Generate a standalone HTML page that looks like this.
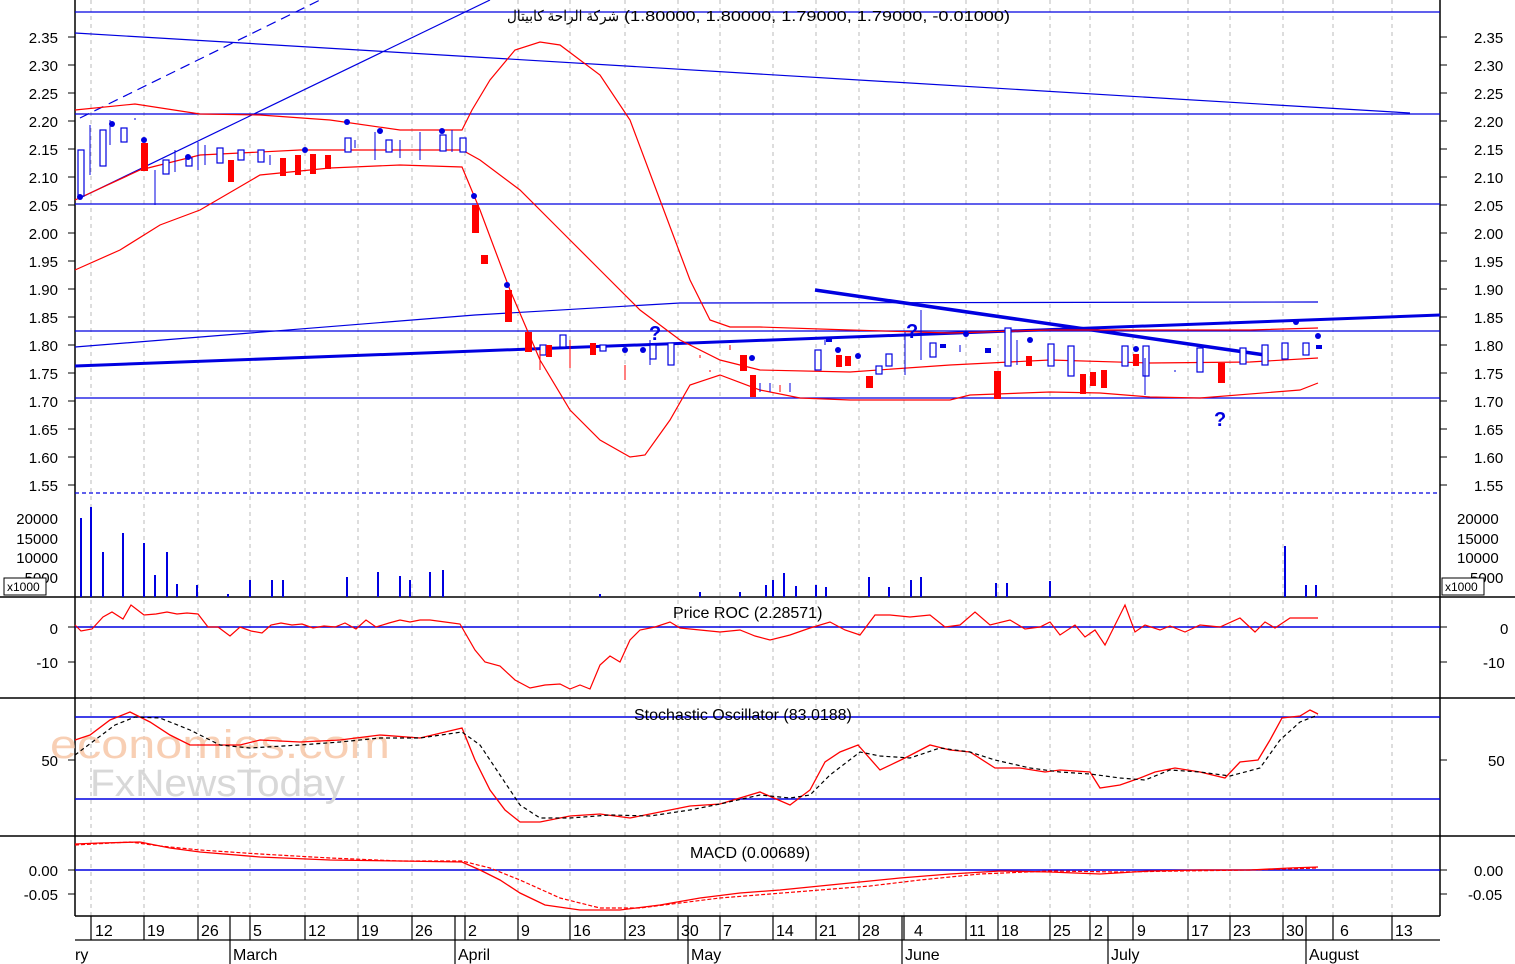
<!DOCTYPE html>
<html><head><meta charset="utf-8"><style>
body{margin:0;background:#fff;}
svg{display:block;font-family:"Liberation Sans","Noto Sans CJK SC",sans-serif;}
</style></head><body>
<svg width="1515" height="964" viewBox="0 0 1515 964" xmlns="http://www.w3.org/2000/svg">
<rect width="1515" height="964" fill="#fff"/>
<g stroke="#bbb" stroke-dasharray="4,4" stroke-width="1">
<path d="M91 0V916M144 0V916M198 0V916M250 0V916M305 0V916M358 0V916M412 0V916M465 0V916M518 0V916M570 0V916M625 0V916M678 0V916M720 0V916M773 0V916M816 0V916M859 0V916M904 0V916M966 0V916M998 0V916M1050 0V916M1090 0V916M1133 0V916M1188 0V916M1230 0V916M1283 0V916M1333 0V916M1392 0V916"/>
</g>
<g stroke="#000" stroke-width="1.5" fill="none">
<path d="M75 0V916M1440 0V916M75 597H1440M0 698H1515M75 836H1440M75 916H1440M0 597H75M1440 597H1515M0 836H75M1440 836H1515"/>
</g>
<g stroke="#000" stroke-width="1">
<path d="M68 37H75M68 65H75M68 93H75M68 121H75M68 149H75M68 177H75M68 205H75M68 233H75M68 261H75M68 289H75M68 317H75M68 345H75M68 373H75M68 401H75M68 429H75M68 457H75M68 485H75M1440 37H1447M1440 65H1447M1440 93H1447M1440 121H1447M1440 149H1447M1440 177H1447M1440 205H1447M1440 233H1447M1440 261H1447M1440 289H1447M1440 317H1447M1440 345H1447M1440 373H1447M1440 401H1447M1440 429H1447M1440 457H1447M1440 485H1447M68 627H75M68 662H75M1440 627H1447M1440 662H1447M68 760H75M1440 760H1447M68 870H75M68 894H75M1440 870H1447M1440 894H1447"/>
</g>
<g font-size="15" fill="#000">
<g text-anchor="end">
<text x="58" y="43">2.35</text><text x="58" y="71">2.30</text><text x="58" y="99">2.25</text><text x="58" y="127">2.20</text><text x="58" y="155">2.15</text><text x="58" y="183">2.10</text><text x="58" y="211">2.05</text><text x="58" y="239">2.00</text><text x="58" y="267">1.95</text><text x="58" y="295">1.90</text><text x="58" y="323">1.85</text><text x="58" y="351">1.80</text><text x="58" y="379">1.75</text><text x="58" y="407">1.70</text><text x="58" y="435">1.65</text><text x="58" y="463">1.60</text><text x="58" y="491">1.55</text>
<text x="58" y="524">20000</text><text x="58" y="544">15000</text><text x="58" y="563">10000</text><text x="58" y="583">5000</text>
<text x="58" y="634">0</text><text x="58" y="668">-10</text><text x="58" y="766">50</text>
<text x="58" y="876">0.00</text><text x="58" y="900">-0.05</text>
</g>
<g>
<text x="1474" y="43">2.35</text><text x="1474" y="71">2.30</text><text x="1474" y="99">2.25</text><text x="1474" y="127">2.20</text><text x="1474" y="155">2.15</text><text x="1474" y="183">2.10</text><text x="1474" y="211">2.05</text><text x="1474" y="239">2.00</text><text x="1474" y="267">1.95</text><text x="1474" y="295">1.90</text><text x="1474" y="323">1.85</text><text x="1474" y="351">1.80</text><text x="1474" y="379">1.75</text><text x="1474" y="407">1.70</text><text x="1474" y="435">1.65</text><text x="1474" y="463">1.60</text><text x="1474" y="491">1.55</text>
<text x="1457" y="524">20000</text><text x="1457" y="544">15000</text><text x="1457" y="563">10000</text><text x="1470" y="583">5000</text>
<text x="1500" y="634">0</text><text x="1483" y="668">-10</text><text x="1488" y="766">50</text>
<text x="1474" y="876">0.00</text><text x="1468" y="900">-0.05</text>
</g>
</g>
<rect x="4" y="578" width="42" height="17" fill="#fff" stroke="#000"/><text x="7" y="591" font-size="12">x1000</text>
<rect x="1442" y="578" width="42" height="17" fill="#fff" stroke="#000"/><text x="1445" y="591" font-size="12">x1000</text>

<g stroke="#0000e0" stroke-width="1.2" fill="none">
<path d="M75 12H1440M75 114H1440M75 204H1440M75 331H1440M75 398H1440"/>
<path d="M75 493H1440" stroke-dasharray="4,3"/>
<path d="M75 33L1410 113"/>
<path d="M75 347L475 315L680 303L1318 302"/>
<path d="M80 198L490 0"/>
<path d="M80 118L320 0" stroke-dasharray="10,6"/>
<path d="M75 366L1440 315" stroke-width="3"/>
<path d="M815 290L1265 355" stroke-width="3.5"/>
</g>
<text x="507" y="21" font-size="15" fill="#000" textLength="112" lengthAdjust="spacingAndGlyphs">شركة الراحة كابيتال</text>
<text x="624" y="21" font-size="15" fill="#000" textLength="386" lengthAdjust="spacingAndGlyphs">(1.80000, 1.80000, 1.79000, 1.79000, -0.01000)</text>

<g stroke="#f00" stroke-width="1.2" fill="none">
<path d="M75 110L135 104L200 114L260 115L330 120L400 130L462 130L472 110L490 80L515 50L540 42L560 45L600 75L630 120L660 200L690 280L710 320L730 327L760 327L850 330L950 333L1050 330L1150 330L1250 330L1318 328"/>
<path d="M75 200L140 170L200 155L300 150L400 150L462 150L480 160L520 190L560 230L600 270L640 310L680 340L720 360L760 370L850 372L950 365L1050 360L1150 363L1250 362L1318 358"/>
<path d="M75 270L120 250L160 225L200 210L260 175L330 168L400 165L462 167L480 210L510 290L540 360L570 410L600 440L630 457L645 455L670 420L690 385L720 375L760 390L800 398L850 400L950 400L970 395L1050 392L1100 393L1150 397L1200 398L1300 390L1318 383"/>
</g>

<g stroke="#0000e0" fill="#fff" stroke-width="1.2">
<rect x="78" y="150" width="6" height="46"/><rect x="100" y="130" width="6" height="36"/><rect x="121" y="128" width="6" height="14"/>
<rect x="163" y="160" width="6" height="14"/><rect x="186" y="158" width="6" height="8"/><rect x="217" y="148" width="6" height="15"/>
<rect x="238" y="150" width="6" height="10"/><rect x="258" y="150" width="6" height="12"/><rect x="345" y="138" width="6" height="14"/>
<rect x="386" y="140" width="6" height="12"/><rect x="440" y="135" width="6" height="16"/><rect x="460" y="138" width="6" height="14"/>
<rect x="650" y="345" width="6" height="14"/><rect x="668" y="343" width="6" height="22"/><rect x="815" y="350" width="6" height="20"/>
<rect x="876" y="366" width="6" height="8"/><rect x="886" y="354" width="6" height="12"/><rect x="930" y="343" width="6" height="14"/>
<rect x="1005" y="328" width="6" height="38"/><rect x="1048" y="344" width="6" height="22"/><rect x="1068" y="346" width="6" height="30"/>
<rect x="1122" y="346" width="6" height="20"/><rect x="1143" y="346" width="6" height="30"/><rect x="1197" y="348" width="6" height="24"/>
<rect x="1240" y="348" width="6" height="16"/><rect x="1262" y="345" width="6" height="20"/><rect x="1282" y="343" width="6" height="16"/><rect x="1303" y="343" width="6" height="12"/>
<rect x="540" y="345" width="6" height="10"/><rect x="560" y="335" width="6" height="12"/><rect x="600" y="345" width="6" height="6"/>
</g>
<g fill="#f00">
<rect x="141" y="143" width="7" height="28"/><rect x="228" y="160" width="6" height="22"/><rect x="280" y="158" width="6" height="18"/><rect x="295" y="155" width="6" height="20"/><rect x="310" y="154" width="6" height="20"/><rect x="325" y="155" width="6" height="14"/>
<rect x="472" y="205" width="7" height="28"/><rect x="481" y="255" width="7" height="9"/><rect x="505" y="290" width="7" height="32"/><rect x="525" y="332" width="7" height="20"/><rect x="546" y="345" width="6" height="12"/><rect x="590" y="343" width="6" height="12"/>
<rect x="740" y="355" width="7" height="16"/><rect x="750" y="375" width="6" height="22"/><rect x="836" y="355" width="6" height="12"/><rect x="845" y="356" width="6" height="10"/><rect x="866" y="376" width="7" height="12"/>
<rect x="994" y="371" width="7" height="28"/><rect x="1026" y="356" width="6" height="10"/><rect x="1080" y="374" width="6" height="20"/><rect x="1090" y="372" width="6" height="14"/><rect x="1101" y="370" width="6" height="18"/><rect x="1133" y="354" width="6" height="12"/><rect x="1218" y="363" width="7" height="20"/>
</g>
<g stroke="#0000e0" stroke-width="1"><path d="M90 125V175M110 120V145M135 118V120M155 170V205M175 150V172M198 142V170M205 145V165M270 155V165M355 140V148M375 132V160M400 140V158M420 132V160M452 130V152M650 340V365M760 383V392M770 383V392M790 383V392M825 340V345M905 332V375M921 310V360M960 345V352M1017 340V365M1145 358V395M1175 370V372"/></g>
<g stroke="#f00" stroke-width="1"><path d="M570 340V368M625 365V380M700 355V358M710 370V372M730 345V350M780 385V392M540 350V370"/></g>
<g fill="#0000e0">
<circle cx="80" cy="197" r="3"/><circle cx="112" cy="124" r="3"/><circle cx="144" cy="140" r="3"/><circle cx="188" cy="157" r="3"/><circle cx="305" cy="150" r="3"/><circle cx="347" cy="122" r="3"/><circle cx="380" cy="131" r="3"/><circle cx="442" cy="131" r="3"/><circle cx="474" cy="196" r="3"/><circle cx="507" cy="285" r="3"/><circle cx="625" cy="350" r="3"/><circle cx="643" cy="350" r="3"/><circle cx="752" cy="358" r="3"/><circle cx="838" cy="350" r="3"/><circle cx="858" cy="356" r="3"/><circle cx="966" cy="334" r="3"/><circle cx="1030" cy="340" r="3"/><circle cx="1136" cy="349" r="3"/><circle cx="1318" cy="336" r="3"/><circle cx="1296" cy="322" r="3"/>
<rect x="826" y="338" width="6" height="4"/><rect x="940" y="344" width="6" height="4"/><rect x="985" y="348" width="6" height="5"/><rect x="1316" y="345" width="6" height="4"/>
</g>
<g fill="#0000e0" font-size="20" font-weight="bold"><text x="649" y="340">?</text><text x="906" y="338">?</text><text x="1214" y="426">?</text></g>

<g stroke="#0000e0" stroke-width="2">
<path d="M81 597V518M91 597V507M103 597V552M123 597V533M144 597V543M155 597V575M167 597V552M177 597V584M197 597V585M250 597V580M272 597V580M283 597V580M347 597V577M378 597V572M400 597V576M410 597V580M430 597V572M443 597V570M766 597V585M773 597V580M784 597V573M796 597V586M816 597V585M826 597V587M869 597V577M889 597V587M911 597V580M921 597V577M996 597V583M1007 597V583M1050 597V581M1285 597V546M1306 597V585M1316 597V585M228 597V594M600 597V594M700 597V592M740 597V592"/>
</g>

<path d="M75 627H1440" stroke="#0000e0" stroke-width="1.5"/>
<text x="673" y="618" font-size="16">Price ROC (2.28571)</text>
<path fill="none" stroke="#f00" stroke-width="1.2" d="M75 625L81 631L92 629L103 617L112 612L123 619L131 605L144 615L156 614L167 612L177 614L187 613L198 614L208 627L218 627L230 636L240 627L251 631L262 633L271 625L281 623L292 625L302 624L313 628L324 626L335 627L345 623L356 629L366 620L376 627L389 623L400 620L410 622L420 620L430 620L445 622L460 624L475 650L485 662L500 666L515 680L530 688L545 685L560 684L570 689L580 685L590 689L600 665L610 656L620 662L630 640L640 630L655 627L670 622L680 628L700 630L720 632L740 630L755 636L770 640L790 635L810 628L830 622L845 630L860 635L875 615L890 615L910 617L930 615L945 627L960 625L975 612L990 625L1010 620L1025 629L1040 627L1050 622L1060 635L1075 625L1085 637L1095 630L1105 645L1115 625L1125 605L1135 632L1145 625L1160 630L1170 626L1185 632L1200 625L1220 627L1240 618L1255 632L1265 622L1275 628L1290 618L1318 618"/>

<path d="M75 717H1440M75 799H1440" stroke="#0000e0" stroke-width="1.5"/>
<text x="50" y="758" font-size="40" fill="#f7c7a8" opacity="0.85" textLength="340" lengthAdjust="spacingAndGlyphs">economies.com</text>
<text x="90" y="796" font-size="38" fill="#d8d8d8" textLength="255" lengthAdjust="spacingAndGlyphs">FxNewsToday</text>
<text x="634" y="720" font-size="16">Stochastic Oscillator (83.0188)</text>
<path fill="none" stroke="#f00" stroke-width="1.3" d="M75 740L90 735L110 720L130 712L150 722L170 735L190 745L210 745L240 745L260 740L300 742L340 740L380 735L420 738L462 728L475 760L490 790L505 810L520 822L540 822L570 816L600 814L630 818L660 812L690 806L720 804L760 792L790 805L810 790L825 762L840 752L858 745L880 770L905 758L930 745L950 750L970 752L995 768L1020 768L1045 772L1060 770L1090 772L1100 788L1120 785L1140 778L1155 772L1175 768L1200 772L1225 778L1240 762L1258 760L1270 740L1282 718L1300 716L1310 710L1318 714"/>
<path fill="none" stroke="#000" stroke-width="1.2" stroke-dasharray="4,3" d="M75 755L95 740L115 725L135 717L160 718L190 730L220 745L250 748L300 745L340 742L380 738L420 738L462 732L480 745L500 775L520 805L540 818L570 818L610 815L650 816L690 810L720 804L760 795L790 798L810 795L830 775L860 752L880 756L910 758L940 748L970 752L995 760L1030 768L1060 772L1090 774L1120 778L1145 780L1170 770L1200 772L1230 776L1260 768L1280 740L1300 722L1318 715"/>

<path d="M75 870H1440" stroke="#0000e0" stroke-width="1.5"/>
<text x="690" y="858" font-size="16">MACD (0.00689)</text>
<path fill="none" stroke="#f00" stroke-width="1.3" d="M75 844L100 843L140 842L170 848L200 852L260 857L330 860L400 861L462 862L480 870L500 880L520 893L545 905L580 910L620 910L660 905L700 898L740 893L780 890L820 886L860 882L900 878L950 874L1000 871L1050 872L1100 874L1150 871L1200 870L1250 870L1290 868L1318 867"/>
<path fill="none" stroke="#f00" stroke-width="1.2" stroke-dasharray="4,2" d="M75 845L130 842L160 846L200 850L260 854L330 858L400 861L462 861L490 868L520 880L560 898L600 908L640 908L680 903L720 898L770 894L820 890L870 886L920 880L980 874L1050 871L1120 872L1180 871L1250 870L1318 868"/>

<g stroke="#000" stroke-width="1.2">
<path d="M91 916V940M144 916V940M198 916V940M250 916V940M305 916V940M358 916V940M412 916V940M465 916V940M518 916V940M570 916V940M625 916V940M678 916V940M720 916V940M773 916V940M816 916V940M859 916V940M904 916V940M966 916V940M998 916V940M1050 916V940M1090 916V940M1133 916V940M1188 916V940M1230 916V940M1283 916V940M1333 916V940M1392 916V940"/>
<path d="M230 916V964M455 916V964M688 916V964M902 916V964M1108 916V964M1306 916V964M75 940H1440"/>
</g>
<g font-size="16" fill="#000">
<text x="95" y="936">12</text><text x="147" y="936">19</text><text x="201" y="936">26</text><text x="253" y="936">5</text><text x="308" y="936">12</text><text x="361" y="936">19</text><text x="415" y="936">26</text><text x="468" y="936">2</text><text x="521" y="936">9</text><text x="573" y="936">16</text><text x="628" y="936">23</text><text x="681" y="936">30</text><text x="723" y="936">7</text><text x="776" y="936">14</text><text x="819" y="936">21</text><text x="862" y="936">28</text><text x="914" y="936">4</text><text x="969" y="936">11</text><text x="1001" y="936">18</text><text x="1053" y="936">25</text><text x="1094" y="936">2</text><text x="1137" y="936">9</text><text x="1191" y="936">17</text><text x="1233" y="936">23</text><text x="1286" y="936">30</text><text x="1340" y="936">6</text><text x="1395" y="936">13</text>
<text x="75" y="960">ry</text><text x="233" y="960">March</text><text x="458" y="960">April</text><text x="691" y="960">May</text><text x="905" y="960">June</text><text x="1111" y="960">July</text><text x="1309" y="960">August</text>
</g>
</svg>
</body></html>
